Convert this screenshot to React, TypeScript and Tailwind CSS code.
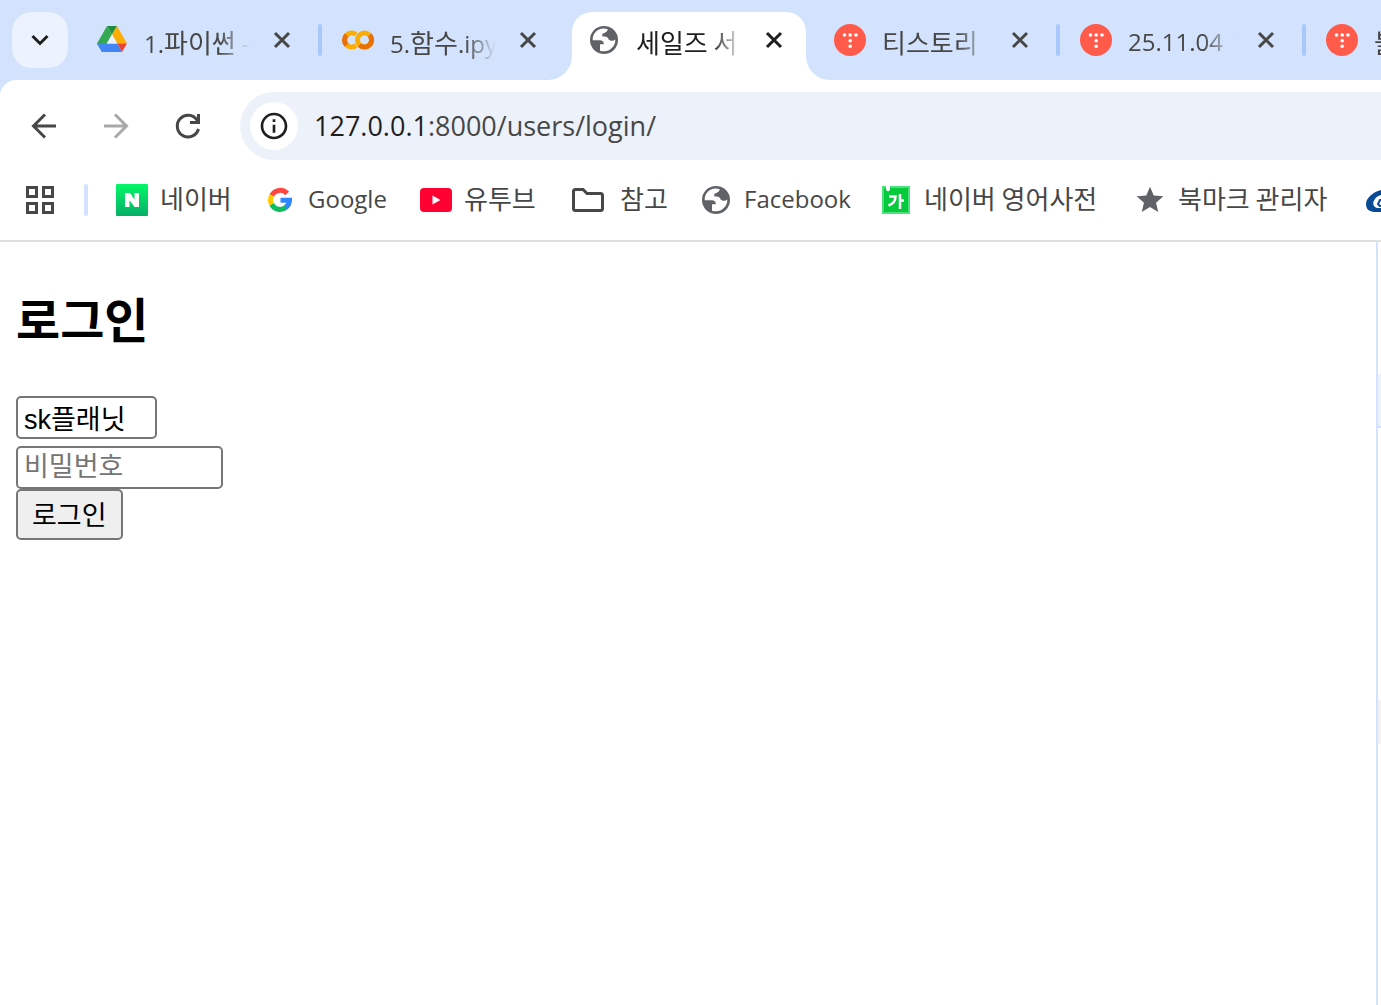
import type { ReactNode } from "react";
import { MdOutlineInfo, MdStar } from "react-icons/md";

const LATIN = "font-['Open_Sans','Noto_Sans_CJK_KR',sans-serif]";

// Hangul is set one step larger than the Latin text beside it
function Label({ text }: { text: string }) {
  return (
    <>
      {text.split(/([가-힣]+(?: [가-힣]+)*)/).map((part, i) =>
        /[가-힣]/.test(part) ? (
          <span key={i} className="text-[26px] font-['Noto_Sans_CJK_KR',sans-serif]">
            {part}
          </span>
        ) : (
          part
        )
      )}
    </>
  );
}

function DriveIcon() {
  return (
    <svg viewBox="0 0 32 32" className="w-8 h-8">
      <path d="M11 2 L1 19.500 L6 28 L16 10.500 Z" fill="#34a853" />
      <path d="M11 2 H21 L16 10.500 Z" fill="#1e8e3e" />
      <path d="M21 2 L31 19.500 H21.200 L16 10.500 Z" fill="#fbad05" />
      <path d="M1 19.500 H21.200 L26 28 H6 Z" fill="#4285f4" />
      <path d="M21.200 19.500 H31 L26 28 Z" fill="#ea4335" />
      <path d="M16 10.500 L10.800 19.500 H21.200 Z" fill="#e9f1fe" />
    </svg>
  );
}

function ColabIcon() {
  return (
    <svg viewBox="0 0 32 32" className="w-8 h-8" fill="none" strokeWidth="5">
      <path d="M14 10.400 A7 7 0 1 0 14 21.600" stroke="#fbac05" />
      <path d="M4.600 11 A7 7 0 0 0 4.600 21" stroke="#e8710a" />
      <circle cx="22.500" cy="16" r="7" stroke="#fbac05" />
      <path d="M27.500 11 A7 7 0 0 1 17.500 21" stroke="#e8710a" />
    </svg>
  );
}

function GlobeIcon() {
  return (
    <svg viewBox="0 0 32 32" className="w-8 h-8">
      <circle cx="16" cy="16" r="14" fill="#5f6368" />
      <path
        d="M19.800 5.200 C11 2.500 4.300 9 4.700 16.300 H11.500 C14.500 16.300 16.200 18 15.700 20.300 H12 V26.700 C20 29.500 27.700 23 27.300 15.500 C25.500 17.300 22.500 17 21 16 C20 13 18 12.600 14.300 12.600 V10 C15.500 8.800 19 9 19.800 5.200 Z"
        fill="#fff"
      />
    </svg>
  );
}

function TistoryIcon() {
  return (
    <svg viewBox="0 0 32 32" className="w-8 h-8">
      <circle cx="16" cy="16" r="16" fill="#ff5a4a" />
      <g fill="#fff">
        <circle cx="10.500" cy="11" r="1.800" />
        <circle cx="16.200" cy="11" r="1.800" />
        <circle cx="22" cy="11" r="1.800" />
        <circle cx="16.200" cy="16.700" r="1.800" />
        <circle cx="16.200" cy="22.300" r="1.800" />
      </g>
    </svg>
  );
}

function NaverIcon() {
  return (
    <svg viewBox="0 0 32 32" className="w-8 h-8">
      <defs>
        <linearGradient id="naver" x1="0" y1="0" x2="0" y2="1">
          <stop offset="0" stopColor="#03f768" />
          <stop offset="1" stopColor="#05af67" />
        </linearGradient>
      </defs>
      <rect width="32" height="32" rx="1" fill="url(#naver)" />
      <path d="M9 9 H14 L18.500 15.500 V9 H23 V23 H18.500 L13.500 16.300 V23 H9 Z" fill="#fff" />
    </svg>
  );
}

function GoogleIcon() {
  return (
    <svg viewBox="0 0 32 32" className="w-8 h-8" fill="none" strokeWidth="5">
      <path d="M23.200 9.500 A9.500 9.500 0 0 0 7.700 11.500" stroke="#ff4641" />
      <path d="M7.900 11.200 A9.500 9.500 0 0 0 7.900 20.800" stroke="#fdc800" />
      <path d="M7.700 20.500 A9.500 9.500 0 0 0 22 23.300" stroke="#0ebc5f" />
      <path d="M21.600 23.600 A9.500 9.500 0 0 0 25.500 16.200 H16.500" stroke="#3086ff" />
    </svg>
  );
}

function YoutubeIcon() {
  return (
    <svg viewBox="0 0 32 32" className="w-8 h-8">
      <rect y="4" width="32" height="24" rx="4" fill="#ff0033" />
      <path d="M12.500 11.500 L20.500 16 L12.500 20.500 Z" fill="#fff" />
    </svg>
  );
}

function FolderIcon() {
  return (
    <svg viewBox="0 0 40 32" className="w-10 h-8" fill="none" stroke="#474747" strokeWidth="3">
      <path d="M7.500 5.500 H15 L19 9.500 H32.500 Q34.500 9.500 34.500 11.500 V24.500 Q34.500 26.500 32.500 26.500 H7.500 Q5.500 26.500 5.500 24.500 V7.500 Q5.500 5.500 7.500 5.500 Z" />
    </svg>
  );
}

function DictionaryIcon() {
  return (
    <svg viewBox="0 0 32 32" className="w-8 h-8">
      <rect x="2" y="2" width="28" height="28" fill="#4ee07d" />
      <rect x="4" y="4" width="24" height="24" fill="#05cb3c" />
      <path d="M6 2 H10 V6 L8 7.500 L6 6 Z" fill="#fff" />
      <g fill="none" stroke="#fff" strokeWidth="2.500">
        <path d="M9 12.500 H15.500 Q15.500 19 8.500 21.500" />
        <path d="M20 10 V25 M20 16.500 H24" />
      </g>
    </svg>
  );
}

function SwooshIcon() {
  return (
    <svg viewBox="0 0 32 32" className="w-8 h-8">
      <path
        d="M24 5 C13 6 4 13 4 20 C4 26 8 28 14 28 H22 V24 H15 C11 23 10 19 13 15 C15 12 18 11 24 10 Z"
        fill="#084b94"
      />
      <path d="M22 16 H18 L16 20 L18 22 H22" fill="none" stroke="#084b94" strokeWidth="2" />
    </svg>
  );
}

function CloseIcon() {
  return (
    <svg viewBox="0 0 20 20" className="w-5 h-5" fill="none" stroke="currentColor" strokeWidth="3">
      <path d="M3 3 L17 17 M17 3 L3 17" />
    </svg>
  );
}

// Outward curve where the active tab meets the toolbar
function TabFlare({ className }: { className: string }) {
  return (
    <svg viewBox="0 0 24 24" className={`absolute bottom-0 w-6 h-6 ${className}`}>
      <path d="M24 0 V24 H0 A24 24 0 0 0 24 0 Z" fill="#fff" />
    </svg>
  );
}

const tabs: { title: string; icon: ReactNode; active?: boolean; divider?: boolean }[] = [
  { title: "1.파이썬 -", icon: <DriveIcon /> },
  { title: "5.함수.ipy", icon: <ColabIcon />, divider: true },
  { title: "세일즈 서", icon: <GlobeIcon />, active: true },
  { title: "티스토리", icon: <TistoryIcon /> },
  { title: "25.11.04 1", icon: <TistoryIcon />, divider: true },
  { title: "블", icon: <TistoryIcon />, divider: true },
];

const bookmarks: { title: string; icon: ReactNode; width: string }[] = [
  { title: "네이버", icon: <NaverIcon />, width: "w-[116px]" },
  { title: "Google", icon: <GoogleIcon />, width: "w-[124px]" },
  { title: "유투브", icon: <YoutubeIcon />, width: "w-[116px]" },
  { title: "참고", icon: <FolderIcon />, width: "w-[100px]" },
  { title: "Facebook", icon: <GlobeIcon />, width: "w-[148px]" },
  { title: "네이버 영어사전", icon: <DictionaryIcon />, width: "w-[222px]" },
  { title: "북마크 관리자", icon: <MdStar className="w-8 h-8 text-[#5f6368]" />, width: "w-[196px]" },
  { title: "", icon: <SwooshIcon />, width: "w-8" },
];

function TabStrip() {
  return (
    <div className="flex h-20 bg-[#d3e3fd] overflow-hidden">
      <div className="w-[74px] shrink-0 pl-3 pt-3">
        <button aria-label="Search tabs" className="w-14 h-14 rounded-[20px] bg-[#ecf2fe] flex items-center justify-center">
          <svg viewBox="0 0 20 20" className="w-5 h-5" fill="none" stroke="#1f1f1f" strokeWidth="3">
            <path d="M2.500 6 L10 13.500 L17.500 6" />
          </svg>
        </button>
      </div>
      {tabs.map((tab) => (
        <div key={tab.title} className="relative w-[246px] shrink-0 px-[6px] pt-3">
          {tab.divider && <span className="absolute -left-0.5 top-6 w-1 h-8 rounded-sm bg-[#a8c7fa]" />}
          {tab.active && (
            <>
              <TabFlare className="-left-[18px]" />
              <TabFlare className="-right-[18px] -scale-x-100" />
            </>
          )}
          <div
            className={`flex items-start h-full pl-4 pr-3 rounded-t-[20px] ${
              tab.active ? "bg-white text-[#1f1f1f]" : "text-[#474747]"
            }`}
          >
            <span className="shrink-0 h-14 flex items-center">{tab.icon}</span>
            <button className="ml-4 w-[108px] h-14 pt-0.5 shrink-0 whitespace-nowrap text-left text-2xl leading-[56px] mask-r-from-70% mask-r-to-98%">
              <Label text={tab.title} />
            </button>
            <button aria-label={`Close ${tab.title}`} className="ml-auto h-14 w-10 flex items-center justify-center">
              <CloseIcon />
            </button>
          </div>
        </div>
      ))}
    </div>
  );
}

function Toolbar() {
  return (
    <div className="bg-[#d3e3fd]">
      <div className="flex items-center pt-3 bg-white rounded-tl-2xl text-[#474747]">
        <div className="flex items-center gap-10 pl-7 pr-9">
          <button aria-label="Back">
            <svg viewBox="0 0 32 32" className="w-8 h-8" fill="none" stroke="currentColor" strokeWidth="3">
              <path d="M28 16 H6 M17 4.500 L5.500 16 L17 27.500" />
            </svg>
          </button>
          <button aria-label="Forward" className="text-[#a9a9a9]">
            <svg viewBox="0 0 32 32" className="w-8 h-8" fill="none" stroke="currentColor" strokeWidth="3">
              <path d="M4 16 H26 M15 4.500 L26.500 16 L15 27.500" />
            </svg>
          </button>
          <button aria-label="Reload">
            <svg viewBox="0 0 32 32" className="w-8 h-8" fill="none" stroke="currentColor" strokeWidth="3">
              <path d="M26.500 19 A10.800 10.800 0 1 1 25 10 L26 12.500" />
              <path d="M26.500 4 V12.500 H18" />
            </svg>
          </button>
        </div>
        <div className="flex-1 flex items-center h-17 pl-2.5 rounded-l-full bg-[#ecf1fa]">
          <button aria-label="View site information" className="w-12 h-12 rounded-full bg-white flex items-center justify-center">
            <MdOutlineInfo className="w-8 h-8 text-[#1f1f1f]" />
          </button>
          <a href="#" className="ml-4 text-[27px] leading-10 text-[#474747]">
            <span className="text-[#1f1f1f]">127.0.0.1</span>:8000/users/login/
          </a>
        </div>
      </div>
    </div>
  );
}

function BookmarkBar() {
  return (
    <nav className="flex items-center h-20 pl-6 overflow-hidden border-b-2 border-[#e0e0e0] box-content text-[#474747]">
      <button aria-label="All apps" className="shrink-0">
        <svg viewBox="0 0 32 32" className="w-8 h-8" fill="none" stroke="currentColor" strokeWidth="3">
          <path d="M3.500 3.500 h9 v9 h-9 Z M19.500 3.500 h9 v9 h-9 Z M3.500 19.500 h9 v9 h-9 Z M19.500 19.500 h9 v9 h-9 Z" />
        </svg>
      </button>
      <span className="shrink-0 mx-7 w-1 h-8 rounded-sm bg-[#d3e3fd]" />
      <div className="flex gap-8">
        {bookmarks.map(({ title, icon, width }) => (
          <a
            key={title}
            href="#"
            aria-label={title || "Bookmark"}
            className={`shrink-0 flex items-center gap-3 whitespace-nowrap text-2xl ${width}`}
          >
            <span className="shrink-0">{icon}</span>
            <span className="leading-8 pb-0.5">
              <Label text={title} />
            </span>
          </a>
        ))}
      </div>
    </nav>
  );
}

function LoginPage() {
  return (
    <main className="flex-1 px-4 pt-12 text-black font-['Liberation_Sans','Noto_Sans_CJK_KR',sans-serif]">
      <h2 className="text-5xl leading-[64px] font-bold">로그인</h2>
      <form className="mt-[42px] flex flex-col items-start text-[27px]" onSubmit={(e) => e.preventDefault()}>
        <input
          aria-label="아이디"
          defaultValue="sk플래닛"
          className="w-[141px] h-[43px] mb-[7px] px-1.5 border-2 border-[#767676] rounded-[5px] bg-white"
        />
        <input
          type="password"
          aria-label="비밀번호"
          placeholder="비밀번호"
          className="w-[207px] h-[43px] px-1.5 border-2 border-[#767676] rounded-[5px] bg-white placeholder:text-[#757575]"
        />
        <button type="submit" className="h-[51px] px-3.5 pt-1 border-2 border-[#767676] rounded-[5px] bg-[#efefef]">
          로그인
        </button>
      </form>
    </main>
  );
}

export default function App() {
  return (
    <div className={`min-h-screen flex flex-col overflow-hidden bg-white ${LATIN}`}>
      <TabStrip />
      <Toolbar />
      <BookmarkBar />
      <div className="flex-1 flex">
        <LoginPage />
        <aside className="w-[5px] border-l-2 border-[#d3e3fd]">
          <div className="mt-[132px] h-[54px] bg-[#ecf1fa] border-b-2 border-[#d3e3fd]" />
          <div className="mt-[272px] h-11 bg-[#f2f2f2]" />
        </aside>
      </div>
    </div>
  );
}
